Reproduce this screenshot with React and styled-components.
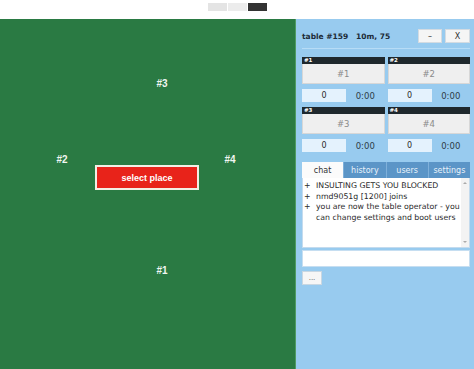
import React from "react";
import styled, { createGlobalStyle } from "styled-components";

const GlobalStyle = createGlobalStyle`
  html, body { margin: 0; padding: 0; background: #ffffff; }
  body { font-family: "DejaVu Sans", Verdana, sans-serif; }
  * { box-sizing: border-box; }
`;

const TopBar = styled.div`
  height: 19px;
  display: flex;
  justify-content: center;
  align-items: flex-start;
  padding-top: 3px;
  gap: 1px;
`;

const TopButton = styled.div`
  width: 19px;
  height: 8px;
  background: ${(p) => p.$bg};
`;

const Main = styled.div`
  display: flex;
  height: 350px;
`;

const Table = styled.div`
  position: relative;
  width: 296px;
  background: #2a7a43;
  border-right: 1px solid #4f9a63;
  font-family: "Liberation Sans", Arial, sans-serif;
`;

const SeatLabel = styled.div`
  position: absolute;
  transform: translate(-50%, -50%);
  color: #f1f6f1;
  font-weight: bold;
  font-size: 10px;
`;

const SelectButton = styled.button`
  position: absolute;
  left: 95px;
  top: 146px;
  width: 104px;
  height: 25px;
  background: #e8231a;
  border: 2px solid #f2efe4;
  color: #ffffff;
  font-family: "Liberation Sans", Arial, sans-serif;
  font-weight: bold;
  font-size: 9px;
  padding: 0;
`;

const Panel = styled.div`
  flex: 1;
  background: #98cbef;
  padding: 10px 4px 0 6px;
  display: flex;
  flex-direction: column;
`;

const Header = styled.div`
  display: flex;
  align-items: center;
  height: 14px;
`;

const Title = styled.div`
  flex: 1;
  font-weight: bold;
  font-size: 7.5px;
  color: #1c2a36;
  white-space: pre;
`;

const WinButton = styled.button`
  width: ${(p) => p.$w}px;
  height: 14px;
  margin-left: 3px;
  padding: 0;
  background: #f5f5f5;
  border: 1px solid #d3dbe2;
  font-family: "DejaVu Sans", Verdana, sans-serif;
  font-size: 8px;
  color: #333;
`;

const Separator = styled.div`
  height: 1px;
  background: #b7dcf6;
  margin-top: 5px;
  margin-bottom: 8px;
`;

const Seats = styled.div`
  display: grid;
  grid-template-columns: 1fr 1fr;
  column-gap: 3px;
  row-gap: 5px;
`;

const SeatCard = styled.div`
  display: flex;
  flex-direction: column;
`;

const SeatHead = styled.div`
  height: 7px;
  background: #1f282d;
  color: #ffffff;
  font-weight: bold;
  font-size: 5.5px;
  line-height: 7px;
  padding-left: 2px;
`;

const SeatBox = styled.div`
  height: 20px;
  background: #efefef;
  border: 1px solid #d7d7d7;
  border-top: none;
  display: flex;
  align-items: center;
  justify-content: center;
  color: #8a8a8a;
  font-size: 8.5px;
`;

const ScoreRow = styled.div`
  display: flex;
  margin-top: 5px;
  height: 13px;
  align-items: center;
`;

const Score = styled.div`
  width: 44px;
  height: 13px;
  background: #e4f2fd;
  display: flex;
  align-items: center;
  justify-content: center;
  font-size: 8px;
  color: #2a2a2a;
`;

const Clock = styled.div`
  flex: 1;
  text-align: center;
  font-size: 8.5px;
  color: #2f3c46;
`;

const Tabs = styled.div`
  display: flex;
  margin-top: 10px;
  height: 16px;
`;

const Tab = styled.div`
  flex: 1;
  display: flex;
  align-items: center;
  justify-content: center;
  font-size: 8px;
  background: ${(p) => (p.$active ? "#fbfbfb" : "#5b95c7")};
  color: ${(p) => (p.$active ? "#333" : "#e9f2fa")};
  border-left: ${(p) => (p.$first ? "none" : "1px solid #7fb0da")};
`;

const ChatBox = styled.div`
  position: relative;
  height: 70px;
  background: #ffffff;
  border: 1px solid #c4dbee;
  border-top: none;
  padding: 3px 8px 0 1px;
`;

const ChatLine = styled.div`
  display: grid;
  grid-template-columns: 12px 1fr;
  font-size: 7.8px;
  line-height: 10.5px;
  color: #2a2a2a;
`;

const Bullet = styled.span`
  text-align: left;
`;

const ScrollBar = styled.div`
  position: absolute;
  right: 0;
  top: 0;
  bottom: 0;
  width: 8px;
  background: #f3f3f3;
  display: flex;
  flex-direction: column;
  justify-content: space-between;
  align-items: center;
  padding: 4px 0;
`;

const Arrow = styled.div`
  width: 0;
  height: 0;
  border-left: 2px solid transparent;
  border-right: 2px solid transparent;
  ${(p) => (p.$up ? "border-bottom: 2px solid #aaa;" : "border-top: 2px solid #aaa;")}
`;

const Input = styled.div`
  margin-top: 2px;
  height: 17px;
  background: #ffffff;
  border: 1px solid #c6def1;
`;

const MoreButton = styled.button`
  margin-top: 4px;
  width: 20px;
  height: 14px;
  padding: 0;
  background: #f6f6f6;
  border: 1px solid #c9d7e2;
  font-family: "DejaVu Sans", Verdana, sans-serif;
  font-size: 7px;
  color: #555;
  align-self: flex-start;
`;

const seats = ["#1", "#2", "#3", "#4"];

const messages = [
  "INSULTING GETS YOU BLOCKED",
  "nmd9051g [1200] joins",
  "you are now the table operator - you can change settings and boot users",
];

export default function App() {
  return (
    <>
      <GlobalStyle />
      <TopBar>
        <TopButton $bg="#e4e4e4" />
        <TopButton $bg="#ececec" />
        <TopButton $bg="#333333" />
      </TopBar>
      <Main>
        <Table>
          <SeatLabel style={{ left: 162, top: 64 }}>#3</SeatLabel>
          <SeatLabel style={{ left: 62, top: 140 }}>#2</SeatLabel>
          <SeatLabel style={{ left: 230, top: 140 }}>#4</SeatLabel>
          <SeatLabel style={{ left: 162, top: 251 }}>#1</SeatLabel>
          <SelectButton>select place</SelectButton>
        </Table>
        <Panel>
          <Header>
            <Title>{"table #159   10m, 75"}</Title>
            <WinButton $w={24}>–</WinButton>
            <WinButton $w={25}>X</WinButton>
          </Header>
          <Separator />
          <Seats>
            {seats.map((s) => (
              <SeatCard key={s}>
                <SeatHead>{s}</SeatHead>
                <SeatBox>{s}</SeatBox>
                <ScoreRow>
                  <Score>0</Score>
                  <Clock>0:00</Clock>
                </ScoreRow>
              </SeatCard>
            ))}
          </Seats>
          <Tabs>
            <Tab $active $first>chat</Tab>
            <Tab>history</Tab>
            <Tab>users</Tab>
            <Tab>settings</Tab>
          </Tabs>
          <ChatBox>
            {messages.map((m) => (
              <ChatLine key={m}>
                <Bullet>+</Bullet>
                <span>{m}</span>
              </ChatLine>
            ))}
            <ScrollBar>
              <Arrow $up />
              <Arrow />
            </ScrollBar>
          </ChatBox>
          <Input />
          <MoreButton>...</MoreButton>
        </Panel>
      </Main>
    </>
  );
}
